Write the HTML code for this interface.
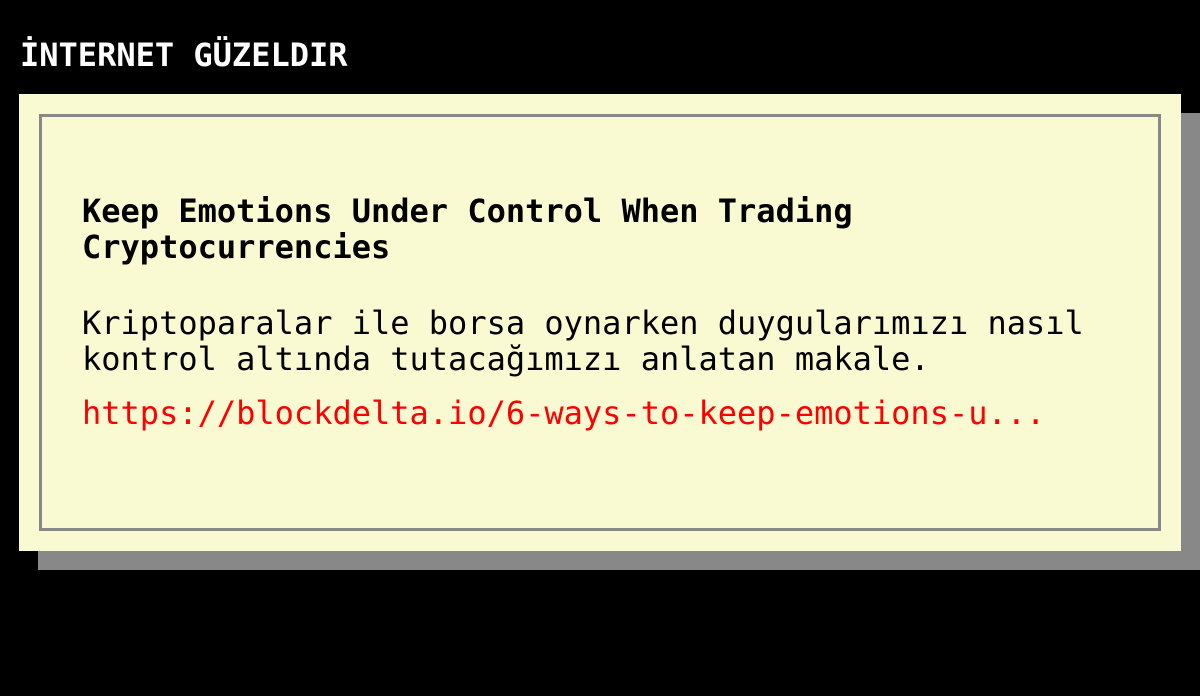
<!DOCTYPE html>
<html><head><meta charset="utf-8"><style>
html,body{margin:0;padding:0;background:#000;width:1200px;height:696px;overflow:hidden}
body{font-family:"DejaVu Sans Mono","Liberation Mono",monospace;font-size:32px}
.t{position:absolute;left:20px;top:36px;color:#fff;font-weight:bold;line-height:38px;font-size:32px}
.sh{position:absolute;left:38px;top:113px;width:1162px;height:457px;background:#888}
.box{position:absolute;left:19px;top:94px;width:1162px;height:457px;background:#fafad2}
.in{position:absolute;left:20px;top:20px;width:1116px;height:411px;border:3px solid #888}
.h{position:absolute;left:40px;top:76px;font-weight:bold;line-height:36px;color:#000;font-size:32px}
.p{position:absolute;left:40px;top:188px;line-height:36px;color:#000;font-size:32px}
.a{position:absolute;left:40px;top:278px;line-height:36px;color:#f00;font-size:32px}
</style></head><body>
<div class="t">İNTERNET GÜZELDIR</div>
<div class="sh"></div>
<div class="box"><div class="in">
<div class="h">Keep Emotions Under Control When Trading<br>Cryptocurrencies</div>
<div class="p">Kriptoparalar ile borsa oynarken duygularımızı nasıl<br>kontrol altında tutacağımızı anlatan makale.</div>
<div class="a">https://blockdelta.io/6-ways-to-keep-emotions-u...</div>
</div></div>
</body></html>
